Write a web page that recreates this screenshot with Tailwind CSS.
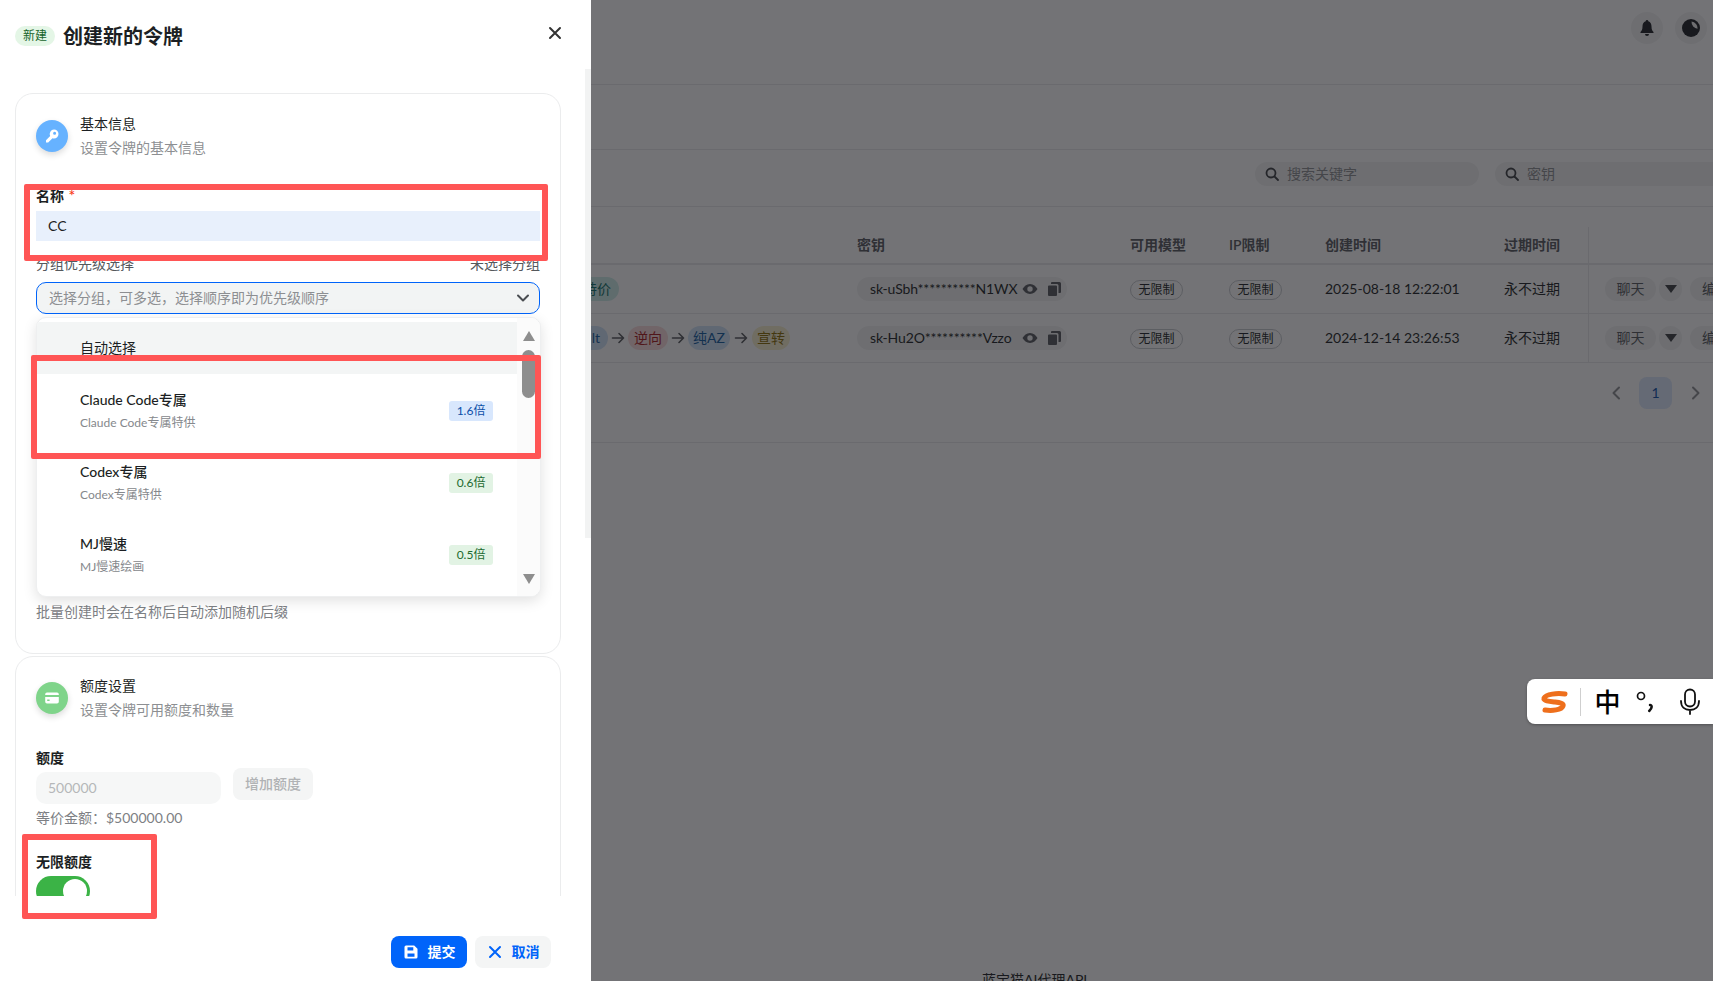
<!doctype html>
<html lang="zh-CN">
<head>
<meta charset="utf-8">
<title>创建新的令牌</title>
<script src="https://cdn.jsdelivr.net/npm/@tailwindcss/browser@4"></script>
</head>
<body class="m-0 overflow-hidden bg-white font-['Lato','Noto_Sans_CJK_SC',sans-serif] text-sm text-[#1c1f23]">
<div class="relative flex h-[981px] w-[1713px] overflow-hidden">

  <!-- drawer -->
  <aside class="relative z-20 flex h-full w-[591px] shrink-0 flex-col bg-white">
    <header class="relative flex h-[93px] shrink-0 items-start pl-[15px] pt-[26px]">
      <span class="flex h-[20px] w-[40px] items-center justify-center rounded-full bg-[#e4f6e6] text-xs leading-5 text-[#17642b]">新建</span>
      <h1 class="-mt-px ml-[8px] text-xl leading-[22px] font-bold">创建新的令牌</h1>
      <svg class="absolute left-[548px] top-[26px] h-[14px] w-[14px]" viewBox="0 0 14 14" fill="none" stroke="#333" stroke-width="2" stroke-linecap="round"><path d="M2 2l10 10M12 2L2 12"/></svg>
    </header>

    <!-- thumb of the drawer's scrollbar -->
    <div class="absolute left-[585px] top-[69px] h-[469px] w-[6px] bg-[#f2f3f3]"></div>

    <div class="relative h-[803px] shrink-0 overflow-hidden">
      <!-- card 1 -->
      <section class="relative ml-[15px] h-[561px] w-[546px] rounded-[18px] border border-[#ebeced] px-5 pt-[18px]">
        <div class="flex">
          <div class="mt-2 flex h-8 w-8 items-center justify-center rounded-full bg-[#66b2ff] shadow-[0_3px_6px_rgba(0,0,0,0.14)]">
            <svg class="h-4 w-4" viewBox="0 0 16 16" fill="#fff"><path fill-rule="evenodd" d="M10 1.500a4.500 4.500 0 0 1 0 9 4.400 4.400 0 0 1-1.500-.26L4.200 14.500H2v-2.300l4.200-4.200A4.500 4.500 0 0 1 10 1.500Zm.6 2.300a1.500 1.500 0 1 0 0 3 1.500 1.500 0 0 0 0-3Z"/></svg>
          </div>
          <div class="ml-3 leading-6">
            <div>基本信息</div>
            <div class="text-[#8d8f92]">设置令牌的基本信息</div>
          </div>
        </div>
        <div class="mt-[26px] font-semibold leading-5">名称 <span class="ml-px text-base leading-4 text-[#f93920]">*</span></div>
        <div class="mt-[5px] flex h-[30px] items-center bg-[#e8f0fc] pl-3">CC</div>
        <div class="mt-[13px] flex justify-between leading-5 text-[#55585c]"><span>分组优先级选择</span><span>未选择分组</span></div>
        <div class="mt-[8px] flex h-8 items-center justify-between rounded-[10px] border border-[#0064fa] bg-[#f2f4f4] pl-3 pr-[9px] text-[#8d8f92]">
          <span>选择分组，可多选，选择顺序即为优先级顺序</span>
          <svg class="h-[14px] w-[14px]" viewBox="0 0 14 14" fill="none" stroke="#4a4d51" stroke-width="2" stroke-linecap="round" stroke-linejoin="round"><path d="M2 4.500 7 9.500l5-5"/></svg>
        </div>
        <div class="mt-[288px] leading-5 text-[#7d8084]">批量创建时会在名称后自动添加随机后缀</div>

        <!-- dropdown -->
        <div class="absolute left-5 top-[223px] flex h-[280px] w-[505px] overflow-hidden rounded-[10px] border border-[#eeeff0] bg-white shadow-[0_4px_14px_rgba(0,0,0,0.12)]">
          <ul class="w-[481px] pt-1">
            <li class="h-[52px] bg-[#f3f5f5] pl-[43px] pt-[14px] leading-6">自动选择</li>
            <li class="flex h-[72px] items-center justify-between pl-[43px] pr-[24px] pb-[3px] pt-[5px]">
              <div><div class="font-medium leading-6">Claude Code专属</div><div class="text-xs leading-[22px] text-[#85888c]">Claude Code专属特供</div></div>
              <span class="flex h-5 w-[44px] items-center justify-center rounded-[3px] bg-[#d8e7fd] text-xs text-[#0a4ea8]">1.6倍</span>
            </li>
            <li class="flex h-[72px] items-center justify-between pl-[43px] pr-[24px] pb-[3px] pt-[5px]">
              <div><div class="font-medium leading-6">Codex专属</div><div class="text-xs leading-[22px] text-[#85888c]">Codex专属特供</div></div>
              <span class="flex h-5 w-[44px] items-center justify-center rounded-[3px] bg-[#e2f3e4] text-xs text-[#1d6b30]">0.6倍</span>
            </li>
            <li class="flex h-[72px] items-center justify-between pl-[43px] pr-[24px] pb-[3px] pt-[5px]">
              <div><div class="font-medium leading-6">MJ慢速</div><div class="text-xs leading-[22px] text-[#85888c]">MJ慢速绘画</div></div>
              <span class="flex h-5 w-[44px] items-center justify-center rounded-[3px] bg-[#e2f3e4] text-xs text-[#1d6b30]">0.5倍</span>
            </li>
          </ul>
          <div class="relative w-[23px] bg-[#fbfbfb]">
            <svg class="absolute left-[6px] top-[13px] h-[10px] w-[12px]" viewBox="0 0 12 10" fill="#8e8e8e"><path d="M6 0l6 10H0z"/></svg>
            <div class="absolute left-[5px] top-[32px] h-[48px] w-[13px] rounded-full bg-[#8e8e8e]"></div>
            <svg class="absolute left-[6px] top-[256px] h-[10px] w-[12px]" viewBox="0 0 12 10" fill="#8e8e8e"><path d="M6 10 12 0H0z"/></svg>
          </div>
        </div>
      </section>

      <!-- card 2 -->
      <section class="ml-[15px] mt-[2px] h-[400px] w-[546px] rounded-[18px] border border-[#ebeced] px-5 pt-[17px]">
        <div class="flex">
          <div class="mt-2 flex h-8 w-8 items-center justify-center rounded-full bg-[#7fd48a] shadow-[0_3px_6px_rgba(0,0,0,0.14)]">
            <svg class="h-4 w-4" viewBox="0 0 16 16" fill="#fff"><path fill-rule="evenodd" d="M3 2.500h10A1.800 1.800 0 0 1 14.800 4.300V5H1.200v-.7A1.800 1.800 0 0 1 3 2.500ZM1.200 7h13.600v4.700A1.800 1.800 0 0 1 13 13.500H3a1.800 1.800 0 0 1-1.800-1.800V7Zm2 2.600v1.400h2.400V9.600H3.200Z"/></svg>
          </div>
          <div class="ml-3 leading-6">
            <div>额度设置</div>
            <div class="text-[#8d8f92]">设置令牌可用额度和数量</div>
          </div>
        </div>
        <div class="mt-[26px] font-semibold leading-5">额度</div>
        <div class="flex items-start">
          <div class="mt-1 flex h-8 w-[185px] items-center rounded-[10px] bg-[#f6f7f7] pl-3 text-[#b5b7b9]">500000</div>
          <div class="ml-3 flex h-8 w-20 items-center justify-center rounded-[8px] bg-[#f4f5f5] font-medium text-[#b0b2b4]">增加额度</div>
        </div>
        <div class="mt-1 leading-5 text-[#7d8084]">等价金额：$500000.00</div>
        <div class="mt-6 font-semibold leading-5">无限额度</div>
        <div class="relative mt-1 h-[30px] w-[54px] rounded-full bg-[#3bb346]">
          <div class="absolute left-[27px] top-[3px] h-6 w-6 rounded-full bg-white"></div>
        </div>
      </section>
    </div>

    <footer class="flex flex-1 items-start justify-end gap-2 pr-10 pt-10">
      <button class="flex h-8 w-[76px] items-center justify-center gap-[9px] rounded-[8px] bg-[#0064fa] font-semibold text-white">
        <svg class="h-4 w-4" viewBox="0 0 16 16" fill="#fff"><path fill-rule="evenodd" d="M3 1.500h8.200L14.500 4.800V13a1.500 1.500 0 0 1-1.500 1.500H3A1.500 1.500 0 0 1 1.500 13V3A1.500 1.500 0 0 1 3 1.500Zm1.500 1.700v3.200h5.800V3.200H4.500ZM4.500 9.500v3.300h7V9.500h-7Z"/></svg>
        提交
      </button>
      <button class="flex h-8 w-[76px] items-center justify-center gap-[9px] rounded-[8px] bg-[#f4f5f5] font-semibold text-[#0064fa]">
        <svg class="h-4 w-4" viewBox="0 0 16 16" fill="none" stroke="#0064fa" stroke-width="2" stroke-linecap="round"><path d="M3 3l10 10M13 3 3 13"/></svg>
        取消
      </button>
    </footer>

    <!-- annotation frames -->
    <div class="pointer-events-none absolute left-[24px] top-[184px] h-[77px] w-[524px] rounded-[2px] border-[6px] border-[#ff5555]"></div>
    <div class="pointer-events-none absolute left-[31px] top-[355px] h-[104px] w-[510px] rounded-[2px] border-[6px] border-[#ff5555]"></div>
    <div class="pointer-events-none absolute left-[22px] top-[834px] h-[85px] w-[135px] rounded-[2px] border-[6px] border-[#ff5555]"></div>
  </aside>

  <!-- page behind the drawer -->
  <main class="relative min-w-0 flex-1 bg-white">
    <div class="flex h-[85px] items-start justify-end gap-3 border-b border-[#e8e9ea] pr-[6px] pt-3">
      <span class="flex h-8 w-8 items-center justify-center rounded-full bg-[#f2f3f3]">
        <svg class="h-[18px] w-[18px]" viewBox="0 0 18 18" fill="#1c1f23"><path d="M9 1a1.300 1.300 0 0 1 1.300 1.300C12.600 3 13.500 5 13.500 7.500c0 3 .8 4.300 2 5.500v1h-13v-1c1.200-1.200 2-2.500 2-5.500C4.500 5 5.400 3 7.700 2.300A1.300 1.300 0 0 1 9 1ZM7 15h4a2 2 0 0 1-4 0Z"/></svg>
      </span>
      <span class="flex h-8 w-8 items-center justify-center rounded-full bg-[#f2f3f3]">
        <svg class="h-5 w-5" viewBox="0 0 20 20"><circle cx="10" cy="10" r="9" fill="#1c1f23"/><path d="M10.500 3.500A6.800 6.800 0 0 1 16.600 10.800 7 7 0 0 1 10.500 3.500Z" fill="#f2f3f3"/></svg>
      </span>
    </div>
    <div class="h-[65px] border-b border-[#e8e9ea]"></div>
    <div class="flex h-[57px] items-start gap-4 border-b border-[#e8e9ea] pl-[664px] pt-[12px] text-[#8d8f92]">
      <div class="flex h-6 w-[224px] shrink-0 items-center gap-2 rounded-full bg-[#f2f3f3] pl-[10px]">
        <svg class="h-[14px] w-[14px]" viewBox="0 0 14 14" fill="none" stroke="#3c3f43" stroke-width="1.800" stroke-linecap="round"><circle cx="6" cy="6" r="4.500"/><path d="M9.500 9.500 13 13"/></svg>
        <span>搜索关键字</span>
      </div>
      <div class="flex h-6 w-[300px] shrink-0 items-center gap-2 rounded-l-full bg-[#f2f3f3] pl-[10px]">
        <svg class="h-[14px] w-[14px]" viewBox="0 0 14 14" fill="none" stroke="#3c3f43" stroke-width="1.800" stroke-linecap="round"><circle cx="6" cy="6" r="4.500"/><path d="M9.500 9.500 13 13"/></svg>
        <span>密钥</span>
      </div>
    </div>

    <!-- table -->
    <div class="grid grid-cols-[266px_273px_99px_96px_179px_84px_1fr] overflow-hidden pt-5">
      <div class="h-[38px] border-b-2 border-[#e8e9ea]"></div>
      <div class="h-[38px] border-b-2 border-[#e8e9ea] pt-[8px] font-semibold leading-5 text-[#55585c]">密钥</div>
      <div class="h-[38px] border-b-2 border-[#e8e9ea] pt-[8px] font-semibold leading-5 text-[#55585c]">可用模型</div>
      <div class="h-[38px] border-b-2 border-[#e8e9ea] pt-[8px] font-semibold leading-5 text-[#55585c]">IP限制</div>
      <div class="h-[38px] border-b-2 border-[#e8e9ea] pt-[8px] font-semibold leading-5 text-[#55585c]">创建时间</div>
      <div class="h-[38px] border-b-2 border-[#e8e9ea] pt-[8px] font-semibold leading-5 text-[#55585c]">过期时间</div>
      <div class="h-[38px] border-b-2 border-l border-[#e8e9ea]"></div>

      <!-- row 1 -->
      <div class="flex h-[49px] items-center border-b border-[#e8e9ea]">
        <span class="-ml-[16px] flex h-6 w-[44px] items-center justify-center rounded-full bg-[#cdeee9] text-[#0d6e66]">特价</span>
      </div>
      <div class="flex h-[49px] items-center border-b border-[#e8e9ea]">
        <div class="flex h-6 w-[210px] items-center rounded-full bg-[#f2f3f3] pl-[13px]">
          <span class="w-[152px] whitespace-nowrap tracking-[-0.15px]">sk-uSbh**********N1WX</span>
          <svg class="h-[14px] w-[16px]" viewBox="0 0 16 14" fill="#55585c"><path fill-rule="evenodd" d="M8 2c3.500 0 6 2.500 7.500 5C14 9.500 11.500 12 8 12S2 9.500.5 7C2 4.500 4.500 2 8 2Zm0 2.300a2.700 2.700 0 1 0 0 5.400 2.700 2.700 0 0 0 0-5.400Z"/></svg>
          <svg class="ml-[9px] h-[14px] w-[14px]" viewBox="0 0 14 14" fill="#55585c"><path d="M1 4.500A1 1 0 0 1 2 3.500h7a1 1 0 0 1 1 1V13a1 1 0 0 1-1 1H2a1 1 0 0 1-1-1ZM4 1a1 1 0 0 1 1-1h7.500A1.500 1.500 0 0 1 14 1.500V10a1 1 0 0 1-1 1h-1.500V3.500A1.500 1.500 0 0 0 10 2H4Z"/></svg>
        </div>
      </div>
      <div class="flex h-[49px] items-center border-b border-[#e8e9ea]"><span class="mt-px flex h-5 w-[53px] items-center justify-center rounded-full border border-[#c6cacd] text-xs">无限制</span></div>
      <div class="flex h-[49px] items-center border-b border-[#e8e9ea]"><span class="mt-px flex h-5 w-[53px] items-center justify-center rounded-full border border-[#c6cacd] text-xs">无限制</span></div>
      <div class="flex h-[49px] items-center border-b border-[#e8e9ea]">2025-08-18 12:22:01</div>
      <div class="flex h-[49px] items-center border-b border-[#e8e9ea]">永不过期</div>
      <div class="flex h-[49px] items-center gap-[3px] border-b border-l border-[#e8e9ea] pl-[16px]">
        <span class="flex h-6 w-[51px] shrink-0 items-center justify-center rounded-full bg-[#f2f3f3] text-[#55585c]">聊天</span>
        <span class="flex h-6 w-[23px] shrink-0 items-center justify-center rounded-full bg-[#f2f3f3]"><svg class="h-2 w-3" viewBox="0 0 12 8" fill="#3c3f43"><path d="M0 0h12L6 8z"/></svg></span>
        <span class="ml-[5px] flex h-6 w-[50px] shrink-0 items-center rounded-l-full bg-[#f2f3f3] pl-3 text-[#55585c]">编辑</span>
      </div>

      <!-- row 2 -->
      <div class="flex h-[49px] items-center border-b border-[#e8e9ea]">
        <span class="-ml-[49px] flex h-6 w-[66px] shrink-0 items-center justify-end rounded-full bg-[#cfe3f7] pr-2 text-[#0f5a9e]">default</span>
        <svg class="mx-[3px] h-[14px] w-[14px] shrink-0" viewBox="0 0 14 14" fill="none" stroke="#55585c" stroke-width="1.600" stroke-linecap="round" stroke-linejoin="round"><path d="M1.500 7h11M8 2.500 12.500 7 8 11.500"/></svg>
        <span class="flex h-6 w-10 shrink-0 items-center justify-center rounded-full bg-[#fbdcdb] text-[#a8171a]">逆向</span>
        <svg class="mx-[3px] h-[14px] w-[14px] shrink-0" viewBox="0 0 14 14" fill="none" stroke="#55585c" stroke-width="1.600" stroke-linecap="round" stroke-linejoin="round"><path d="M1.500 7h11M8 2.500 12.500 7 8 11.500"/></svg>
        <span class="flex h-6 w-[42px] shrink-0 items-center justify-center rounded-full bg-[#cfe3f7] text-[#0f5a9e]">纯AZ</span>
        <svg class="mx-[4px] h-[14px] w-[14px] shrink-0" viewBox="0 0 14 14" fill="none" stroke="#55585c" stroke-width="1.600" stroke-linecap="round" stroke-linejoin="round"><path d="M1.500 7h11M8 2.500 12.500 7 8 11.500"/></svg>
        <span class="flex h-6 w-[38px] shrink-0 items-center justify-center rounded-full bg-[#f8f0cc] text-[#8a6b00]">宣转</span>
      </div>
      <div class="flex h-[49px] items-center border-b border-[#e8e9ea]">
        <div class="flex h-6 w-[210px] items-center rounded-full bg-[#f2f3f3] pl-[13px]">
          <span class="w-[152px] whitespace-nowrap tracking-[-0.15px]">sk-Hu2O**********Vzzo</span>
          <svg class="h-[14px] w-[16px]" viewBox="0 0 16 14" fill="#55585c"><path fill-rule="evenodd" d="M8 2c3.500 0 6 2.500 7.500 5C14 9.500 11.500 12 8 12S2 9.500.5 7C2 4.500 4.500 2 8 2Zm0 2.300a2.700 2.700 0 1 0 0 5.400 2.700 2.700 0 0 0 0-5.400Z"/></svg>
          <svg class="ml-[9px] h-[14px] w-[14px]" viewBox="0 0 14 14" fill="#55585c"><path d="M1 4.500A1 1 0 0 1 2 3.500h7a1 1 0 0 1 1 1V13a1 1 0 0 1-1 1H2a1 1 0 0 1-1-1ZM4 1a1 1 0 0 1 1-1h7.500A1.500 1.500 0 0 1 14 1.500V10a1 1 0 0 1-1 1h-1.500V3.500A1.500 1.500 0 0 0 10 2H4Z"/></svg>
        </div>
      </div>
      <div class="flex h-[49px] items-center border-b border-[#e8e9ea]"><span class="mt-px flex h-5 w-[53px] items-center justify-center rounded-full border border-[#c6cacd] text-xs">无限制</span></div>
      <div class="flex h-[49px] items-center border-b border-[#e8e9ea]"><span class="mt-px flex h-5 w-[53px] items-center justify-center rounded-full border border-[#c6cacd] text-xs">无限制</span></div>
      <div class="flex h-[49px] items-center border-b border-[#e8e9ea]">2024-12-14 23:26:53</div>
      <div class="flex h-[49px] items-center border-b border-[#e8e9ea]">永不过期</div>
      <div class="flex h-[49px] items-center gap-[3px] border-b border-l border-[#e8e9ea] pl-[16px]">
        <span class="flex h-6 w-[51px] shrink-0 items-center justify-center rounded-full bg-[#f2f3f3] text-[#55585c]">聊天</span>
        <span class="flex h-6 w-[23px] shrink-0 items-center justify-center rounded-full bg-[#f2f3f3]"><svg class="h-2 w-3" viewBox="0 0 12 8" fill="#3c3f43"><path d="M0 0h12L6 8z"/></svg></span>
        <span class="ml-[5px] flex h-6 w-[50px] shrink-0 items-center rounded-l-full bg-[#f2f3f3] pl-3 text-[#55585c]">编辑</span>
      </div>
    </div>

    <!-- pagination -->
    <div class="flex h-[80px] items-start border-b border-[#e8e9ea] pl-[1018px] pt-[14px]">
      <span class="flex h-8 w-[14px] items-center justify-center"><svg class="h-[14px] w-[10px]" viewBox="0 0 10 14" fill="none" stroke="#8d8f92" stroke-width="2" stroke-linecap="round" stroke-linejoin="round"><path d="M8 1.500 2.500 7 8 12.500"/></svg></span>
      <span class="ml-[16px] flex h-8 w-[33px] items-center justify-center rounded-[8px] bg-[#dbe8fc] text-[#0a4ea8]">1</span>
      <span class="ml-[17px] flex h-8 w-[14px] items-center justify-center"><svg class="h-[14px] w-[10px]" viewBox="0 0 10 14" fill="none" stroke="#8d8f92" stroke-width="2" stroke-linecap="round" stroke-linejoin="round"><path d="M2 1.500 7.500 7 2 12.500"/></svg></span>
    </div>

    <div class="ml-[391px] mt-[527px] whitespace-nowrap leading-5">蓝宝猫AI代理API</div>

    <!-- mask over the page -->
    <div class="absolute inset-0 bg-[#16161a]/60"></div>
  </main>

  <!-- input-method bar -->
  <div class="absolute left-[1527px] top-[679px] z-30 flex h-[45px] w-[186px] items-center rounded-l-[8px] bg-white pl-[13px] shadow-[0_1px_3px_rgba(0,0,0,0.3)]">
    <svg class="h-6 w-[28px]" viewBox="0 0 28 24" fill="none" stroke="#ee6f1c" stroke-width="5" stroke-linecap="round" stroke-linejoin="round"><path d="M25 4C17 3 6 4 4 8c-1 3 6 3.500 11 4 5 .5 9 1.500 8 4-1.500 4-11 5-18 4"/></svg>
    <span class="ml-[12px] h-7 w-px bg-[#cfcfcf]"></span>
    <span class="ml-[13px] w-[27px] text-center text-[26px] font-medium leading-7 text-black">中</span>
    <svg class="ml-[15px] h-[24px] w-[18px]" viewBox="0 0 18 24" fill="none"><circle cx="5" cy="6" r="3.500" stroke="#111" stroke-width="1.700"/><path d="M14 15c2.200 0 2.500 3-.8 6" stroke="#111" stroke-width="2.500" stroke-linecap="round"/></svg>
    <svg class="ml-[25px] h-7 w-[22px]" viewBox="0 0 22 28" fill="none" stroke="#111" stroke-width="1.800" stroke-linecap="round"><rect x="6" y="1.500" width="10" height="17" rx="5"/><path d="M2 13c0 6 4 9 9 9s9-3 9-9M11 22v4"/></svg>
  </div>
</div>
</body>
</html>
